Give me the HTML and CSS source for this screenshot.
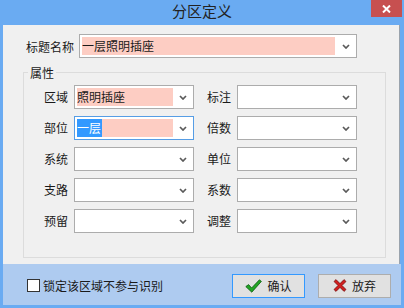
FILE: index.html
```html
<!DOCTYPE html>
<html lang="zh">
<head>
    <meta charset="UTF-8">
    <title>分区定义</title>
    <link rel="stylesheet" href="styles.css">
</head>
<body>
    <div class="window">
        <div class="titlebar">
            <span class="title">分区定义</span>
            <span class="close">
                <svg width="9" height="8" viewBox="0 0 9 8"><path d="M1 0.5 L8 7.5 M8 0.5 L1 7.5" stroke="#fff" stroke-width="2"/></svg>
            </span>
        </div>

        <div class="client">
            <div class="name-row">
                <label>标题名称</label>
                <div class="combo wide">
                    <span class="val pink">一层照明插座</span>
                    <span class="arrow"><svg width="8" height="5" viewBox="0 0 8 5"><path d="M1 1 L4 4 L7 1" fill="none" stroke="#5a5a5a" stroke-width="1.7"/></svg></span>
                </div>
            </div>

            <fieldset class="group">
                <legend>属性</legend>
                <div class="grid">
                    <label>区域</label>
                    <div class="combo">
                        <span class="val pink">照明插座</span>
                        <span class="arrow"><svg width="8" height="5" viewBox="0 0 8 5"><path d="M1 1 L4 4 L7 1" fill="none" stroke="#5a5a5a" stroke-width="1.7"/></svg></span>
                    </div>
                    <label>标注</label>
                    <div class="combo">
                        <span class="val"></span>
                        <span class="arrow"><svg width="8" height="5" viewBox="0 0 8 5"><path d="M1 1 L4 4 L7 1" fill="none" stroke="#5a5a5a" stroke-width="1.7"/></svg></span>
                    </div>

                    <label>部位</label>
                    <div class="combo focus">
                        <span class="val pink"><span class="sel">一层</span></span>
                        <span class="arrow"><svg width="8" height="5" viewBox="0 0 8 5"><path d="M1 1 L4 4 L7 1" fill="none" stroke="#5a5a5a" stroke-width="1.7"/></svg></span>
                    </div>
                    <label>倍数</label>
                    <div class="combo">
                        <span class="val"></span>
                        <span class="arrow"><svg width="8" height="5" viewBox="0 0 8 5"><path d="M1 1 L4 4 L7 1" fill="none" stroke="#5a5a5a" stroke-width="1.7"/></svg></span>
                    </div>

                    <label>系统</label>
                    <div class="combo">
                        <span class="val"></span>
                        <span class="arrow"><svg width="8" height="5" viewBox="0 0 8 5"><path d="M1 1 L4 4 L7 1" fill="none" stroke="#5a5a5a" stroke-width="1.7"/></svg></span>
                    </div>
                    <label>单位</label>
                    <div class="combo">
                        <span class="val"></span>
                        <span class="arrow"><svg width="8" height="5" viewBox="0 0 8 5"><path d="M1 1 L4 4 L7 1" fill="none" stroke="#5a5a5a" stroke-width="1.7"/></svg></span>
                    </div>

                    <label>支路</label>
                    <div class="combo">
                        <span class="val"></span>
                        <span class="arrow"><svg width="8" height="5" viewBox="0 0 8 5"><path d="M1 1 L4 4 L7 1" fill="none" stroke="#5a5a5a" stroke-width="1.7"/></svg></span>
                    </div>
                    <label>系数</label>
                    <div class="combo">
                        <span class="val"></span>
                        <span class="arrow"><svg width="8" height="5" viewBox="0 0 8 5"><path d="M1 1 L4 4 L7 1" fill="none" stroke="#5a5a5a" stroke-width="1.7"/></svg></span>
                    </div>

                    <label>预留</label>
                    <div class="combo">
                        <span class="val"></span>
                        <span class="arrow"><svg width="8" height="5" viewBox="0 0 8 5"><path d="M1 1 L4 4 L7 1" fill="none" stroke="#5a5a5a" stroke-width="1.7"/></svg></span>
                    </div>
                    <label>调整</label>
                    <div class="combo">
                        <span class="val"></span>
                        <span class="arrow"><svg width="8" height="5" viewBox="0 0 8 5"><path d="M1 1 L4 4 L7 1" fill="none" stroke="#5a5a5a" stroke-width="1.7"/></svg></span>
                    </div>
                </div>
            </fieldset>
        </div>

        <div class="footer">
            <span class="checkbox"></span>
            <span class="check-label">锁定该区域不参与识别</span>
            <div class="buttons">
                <button class="btn default">
                    <svg width="17" height="14" viewBox="0 0 17 14"><path d="M0.8 7.6 L3.6 5.6 L6.6 9 L14.4 0.8 L16.4 2.4 L6.8 13.2 Z" fill="#22a524" stroke="#0b5a10" stroke-width="0.8" stroke-linejoin="round"/></svg>
                    <span>确认</span>
                </button>
                <button class="btn">
                    <svg width="14" height="13" viewBox="0 0 14 13"><path d="M1 2.5 L3 0.6 L7 4.6 L11 0.6 L13 2.5 L9 6.5 L13 10.5 L11 12.4 L7 8.4 L3 12.4 L1 10.5 L5 6.5 Z" fill="#d01e1e" stroke="#6a0a0a" stroke-width="0.7" stroke-linejoin="round"/></svg>
                    <span>放弃</span>
                </button>
            </div>
        </div>
    </div>
</body>
</html>
```

FILE: styles.css
```css
body {
    margin: 0;
    font-family: "Noto Sans CJK SC", "Noto Sans", sans-serif;
    font-size: 12px;
    color: #1a1a1a;
}
.window {
    width: 404px;
    height: 308px;
    background-color: #6aabf2;
    display: flex;
    flex-direction: column;
    box-sizing: border-box;
    padding-bottom: 3px;
}
.titlebar {
    height: 25px;
    display: flex;
    align-items: flex-start;
}
.title {
    flex: 1;
    padding-left: 33px;
    text-align: center;
    font-size: 15px;
    line-height: 22px;
    color: #222;
}
.close {
    width: 31px;
    height: 17px;
    margin-right: 2px;
    background-color: #c75050;
    display: flex;
    align-items: center;
    justify-content: center;
}
.client {
    margin: 0 4px 0 3px;
    height: 239px;
    background-color: #f0f0f0;
    border-right: 1px solid #9aa3ad;
}
.name-row {
    display: flex;
    align-items: center;
    margin-top: 9px;
    padding-left: 23px;
    gap: 5px;
}
.combo {
    box-sizing: border-box;
    height: 24px;
    width: 120px;
    display: flex;
    align-items: stretch;
    background: #fff;
    border: 1px solid #acacac;
}
.combo.wide {
    width: 278px;
}
.combo.focus {
    border-color: #569de5;
}
.val {
    flex: 1;
    margin: 2px 0 2px 2px;
    line-height: 18px;
    white-space: nowrap;
    overflow: hidden;
}
.pink {
    background-color: #fdcdc3;
}
.sel {
    display: inline-block;
    background-color: #3399ff;
    color: #fff;
    padding-right: 1px;
}
.arrow {
    width: 20px;
    display: flex;
    align-items: center;
    justify-content: center;
}
.combo.wide .arrow {
    width: 21px;
}
.group {
    margin: 7px 0 0 20px;
    padding: 0 0 24px 0;
    width: 363px;
    box-sizing: border-box;
    border: 1px solid #dcdcdc;
    min-width: 0;
}
.group legend {
    margin-left: 4px;
    padding: 0 2px;
    line-height: 15px;
}
.grid {
    display: grid;
    grid-template-columns: 44px 120px 31px 120px;
    grid-auto-rows: 24px;
    column-gap: 6px;
    row-gap: 7px;
    padding-top: 5px;
}
.grid label {
    text-align: right;
    line-height: 24px;
}
.footer {
    flex: 1;
    margin: 0 3px 0 3px;
    background-color: #aecbf0;
    display: flex;
    align-items: center;
    padding: 2px 10px 0 24px;
}
.checkbox {
    width: 11px;
    height: 11px;
    background: #fff;
    border: 1px solid #333;
}
.check-label {
    margin-left: 3px;
    line-height: 14px;
}
.buttons {
    margin-left: auto;
    display: flex;
    gap: 13px;
}
.btn {
    width: 73px;
    height: 24px;
    box-sizing: border-box;
    padding: 0;
    font-family: inherit;
    font-size: 12px;
    color: #1a1a1a;
    background-color: #e1e1e1;
    border: 1px solid #adadad;
    display: flex;
    align-items: center;
    justify-content: center;
    gap: 5px;
}
.btn.default {
    border-color: #3399ff;
}
```
